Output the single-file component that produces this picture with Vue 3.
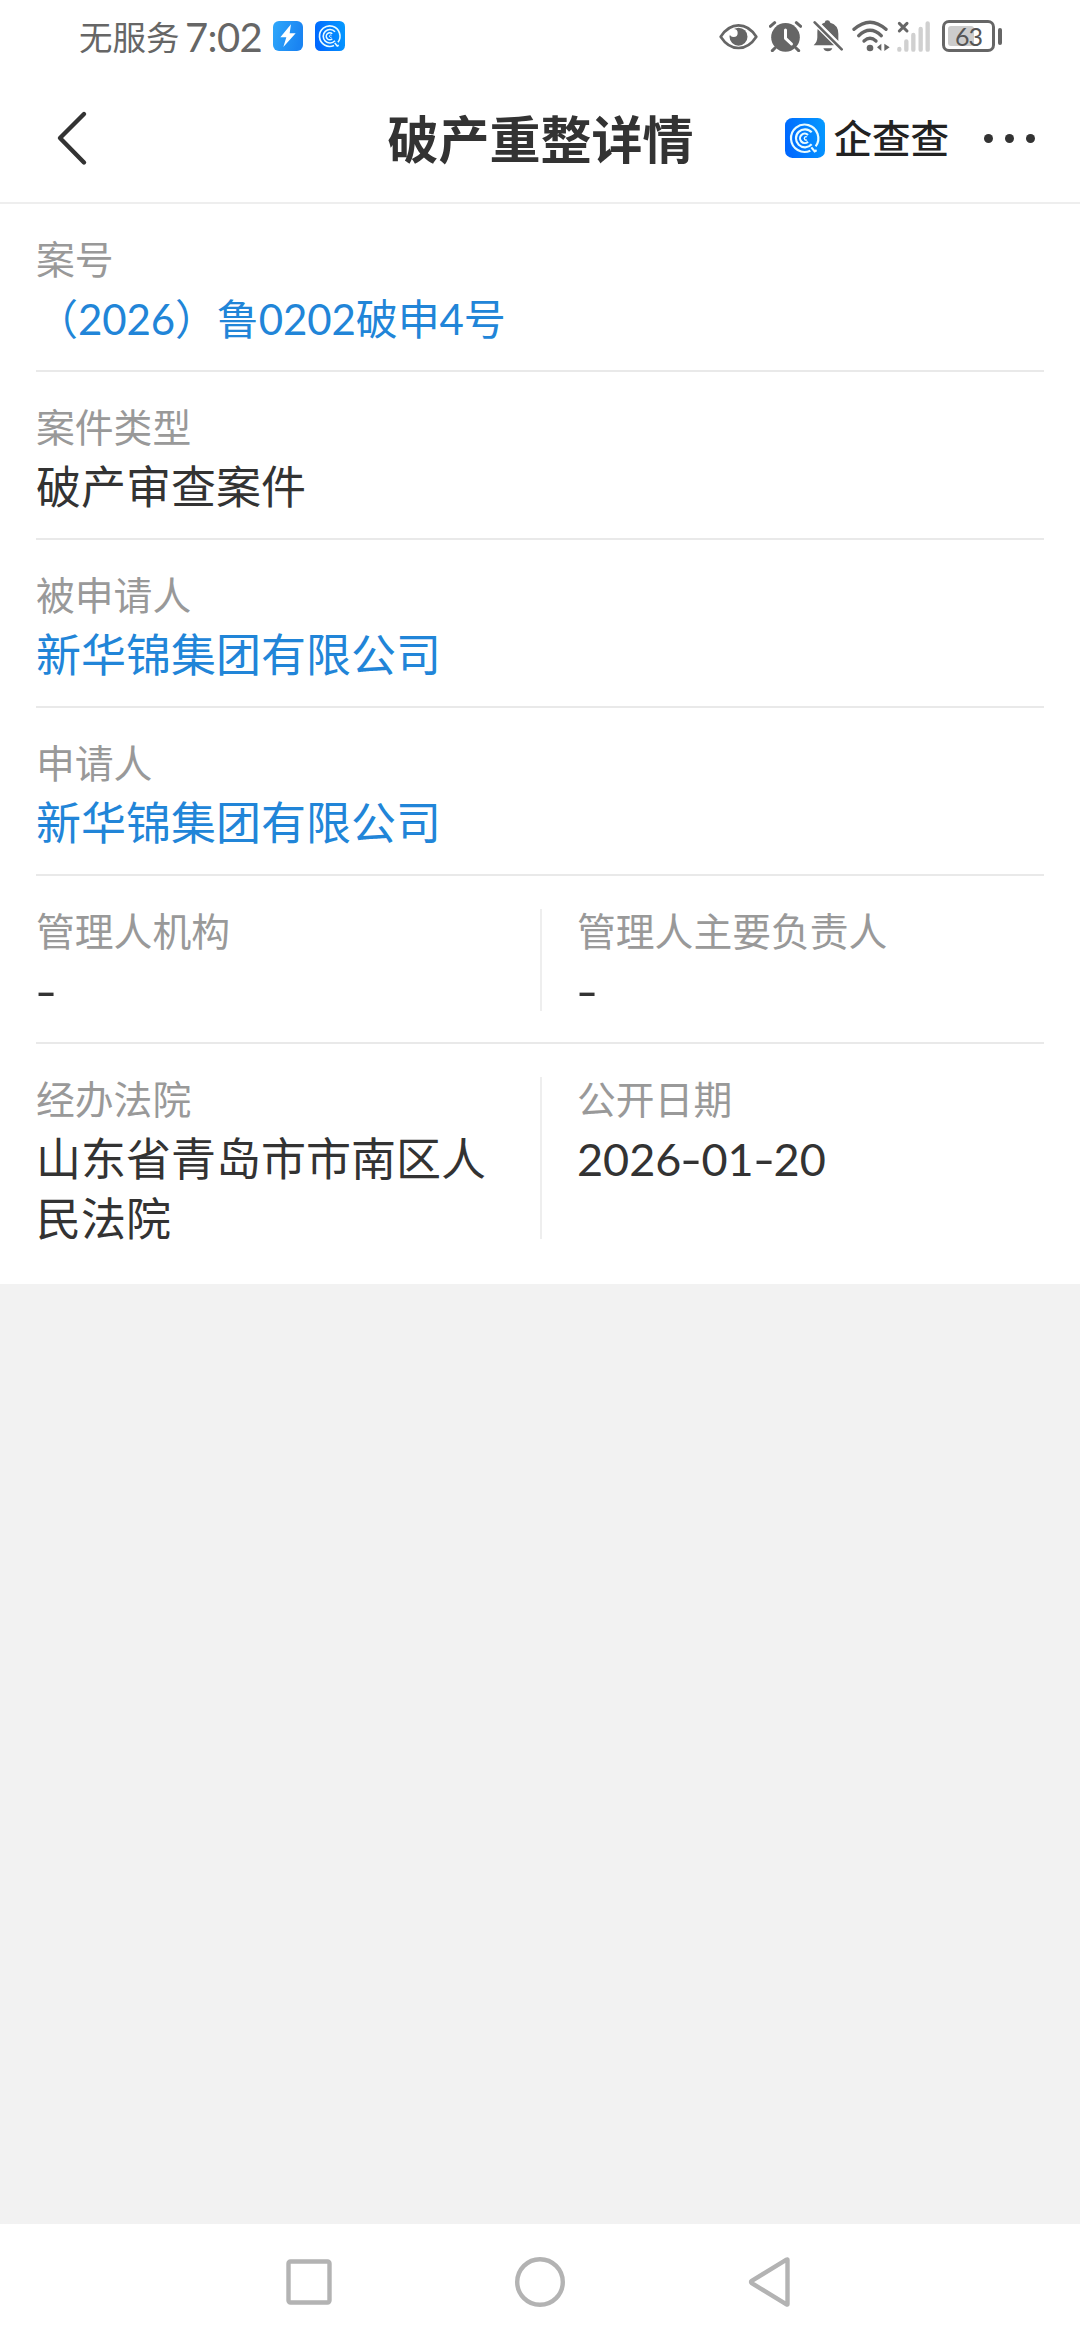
<template>
  <div class="page">
    <div class="status-bar">
      <div class="status-left">
        <span class="carrier">无服务</span>
        <span class="time">7:02</span>
        <svg class="app-icon" viewBox="0 0 90 90">
          <defs>
            <linearGradient id="flash" x1="0" y1="0" x2="1" y2="0.3">
              <stop offset="0" stop-color="#2fa8fb" />
              <stop offset="1" stop-color="#1a84f2" />
            </linearGradient>
          </defs>
          <rect width="90" height="90" rx="18" fill="url(#flash)" />
          <path d="M54 10 22 49h18l-9 29 37-41H50z" fill="#fff" />
        </svg>
        <svg class="app-icon" viewBox="0 0 120 120">
          <use href="#qcc-logo" />
        </svg>
      </div>
      <div class="status-right">
        <!-- eye -->
        <svg class="eye" viewBox="0 0 117 93">
          <path d="M5 47C20 24 38 13 58.500 13S97 24 112 47C97 70 79 81 58.500 81S20 70 5 47Z" fill="none" stroke="#666" stroke-width="8" stroke-linejoin="round" />
          <circle cx="58.500" cy="47" r="27" fill="#666" />
          <circle cx="44" cy="36" r="12" fill="#fff" />
        </svg>
        <!-- alarm -->
        <svg class="alarm" viewBox="0 0 99 93">
          <circle cx="49.500" cy="49" r="43" fill="#666" />
          <path d="M4 16 17 5M95 16 82 5M18 81l-8 8M81 81l8 8" fill="none" stroke="#666" stroke-width="9" stroke-linecap="round" />
          <path d="M49.500 27v25l18 17" fill="none" stroke="#fff" stroke-width="9" stroke-linecap="round" stroke-linejoin="round" />
        </svg>
        <!-- muted bell -->
        <svg class="bell" viewBox="0 0 90 96">
          <path d="M14 27 63 76H2C9 69 13 62 13 52V38q0-6 1-11ZM26 13Q30 9 35 8q1-7 8-7t9 7q24 7 24 33v22Z" fill="#666" />
          <path d="M31 85h27q-3 9-13.500 9T31 85Z" fill="#666" />
          <path d="M14 6 90 82" fill="none" stroke="#fff" stroke-width="5" />
          <path d="M5 7 86 88" fill="none" stroke="#666" stroke-width="8" stroke-linecap="round" />
        </svg>
        <!-- wifi -->
        <svg class="wifi" viewBox="0 0 114 96">
          <g fill="none" stroke="#666" stroke-width="10" stroke-linecap="round">
            <path d="M6 28Q54-15 102 28" />
            <path d="M20 47Q54 15 88 47" />
            <path d="M36 63Q54 46 72 63" />
          </g>
          <circle cx="54" cy="84" r="10" fill="#666" />
          <path d="M88 71v22L75 82ZM97 71v22l16-11Z" fill="#666" />
        </svg>
        <!-- no signal -->
        <svg class="signal" viewBox="0 0 102 93">
          <path d="M7 84v2M28 61v25M49 42v44M71 24v62M92 7v79" fill="none" stroke="#d0d0d0" stroke-width="13" stroke-linecap="round" />
          <path d="M7 7 30 30M30 7 7 30" fill="none" stroke="#666" stroke-width="9" stroke-linecap="round" />
        </svg>
        <div class="battery">
          <div class="battery-body">
            <span class="battery-fill" :style="{ width: battery + '%' }"></span>
            <span class="battery-text">{{ battery }}</span>
          </div>
          <span class="battery-tip"></span>
        </div>
      </div>
    </div>

    <header class="nav-bar">
      <svg class="back" viewBox="0 0 32 56">
        <path d="M28 4 4 28l24 24.500" fill="none" stroke="#333" stroke-width="4.400" stroke-linecap="round" stroke-linejoin="round" />
      </svg>
      <h1 class="title">破产重整详情</h1>
      <div class="nav-right">
        <svg class="brand-icon" viewBox="0 0 120 120">
          <defs>
            <linearGradient id="qcc" x1="0" y1="0.500" x2="1" y2="0.300">
              <stop offset="0" stop-color="#0068ff" />
              <stop offset="1" stop-color="#0598ff" />
            </linearGradient>
          </defs>
          <g id="qcc-logo">
            <rect width="120" height="120" rx="22" fill="url(#qcc)" />
            <g fill="none" stroke="#e8fbff" stroke-width="6.500">
              <path d="M92 85A41 41 0 1 0 76 98M79 88l10 12 6-3" />
              <path d="M80 43A27 27 0 1 0 80 79" />
              <path d="M69 51A14 14 0 1 0 69 71" />
              <path d="M66 57a5 5 0 1 0 0 8" stroke-width="4" />
            </g>
          </g>
        </svg>
        <span class="brand">企查查</span>
        <span class="more"><i></i><i></i><i></i></span>
      </div>
    </header>

    <main class="detail">
      <section v-for="(row, i) in rows" :key="i" class="row" :class="{ two: row.length > 1 }">
        <div v-for="cell in row" :key="cell.label" class="cell">
          <div class="label">{{ cell.label }}</div>
          <div class="value" :class="cell.type">
            <template v-for="(part, n) in split(cell.value)" :key="n">
              <span v-if="part === '-'" class="dash">-</span>
              <template v-else>{{ part }}</template>
            </template>
          </div>
        </div>
      </section>
    </main>

    <footer class="system-nav">
      <svg viewBox="0 0 52 52"><rect x="5.500" y="5.500" width="41" height="41" rx="2" /></svg>
      <svg viewBox="0 0 52 52"><circle cx="26" cy="26" r="22.800" /></svg>
      <svg viewBox="0 0 52 52"><path d="M42.500 3.800v44.400q0 .800-1 .200L6.800 27.200q-1.600-1.200 0-2.400L41.500 3.600q1-.600 1 .200Z" /></svg>
    </footer>
  </div>
</template>

<script setup>
import { ref } from 'vue'

const battery = ref(63)

const rows = [
  [{ label: '案号', value: '（2026）鲁0202破申4号', type: 'link case-no' }],
  [{ label: '案件类型', value: '破产审查案件' }],
  [{ label: '被申请人', value: '新华锦集团有限公司', type: 'link' }],
  [{ label: '申请人', value: '新华锦集团有限公司', type: 'link' }],
  [
    { label: '管理人机构', value: '-' },
    { label: '管理人主要负责人', value: '-' }
  ],
  [
    { label: '经办法院', value: '山东省青岛市市南区人民法院' },
    { label: '公开日期', value: '2026-01-20' }
  ]
]

// keep the dashes as separate parts
const split = (text) => text.split(/(-)/).filter(Boolean)
</script>

<style>
body {
  background: #f2f2f2;
}
</style>

<style scoped>
.page {
  display: flex;
  flex-direction: column;
  width: 1080px;
  height: 2340px;
  background: #f2f2f2;
  color: #333;
  font-family: Lato, 'Noto Sans CJK SC', sans-serif;
  overflow: hidden;
}

svg {
  display: block;
  flex: none;
}

.status-bar {
  display: flex;
  justify-content: space-between;
  height: 72px;
  padding: 0 78px 0 79px;
  background: #fff;
  color: #666;
}

.status-left,
.status-right {
  display: flex;
  align-items: center;
  height: 72px;
}

.carrier {
  width: 106px;
  padding-top: 1px;
  font-size: 33.5px;
  line-height: 72px;
}

.time {
  width: 88px;
  padding-top: 2px;
  font-size: 40px;
  line-height: 72px;
  letter-spacing: -0.6px;
  white-space: nowrap;
}

.app-icon {
  width: 30px;
  height: 30px;
  margin-right: 12px;
}

.eye {
  width: 39px;
  height: 31px;
  margin-right: 11px;
}

.alarm {
  width: 33px;
  height: 31px;
  margin-right: 11px;
}

.bell {
  width: 30px;
  height: 32px;
  margin-right: 9px;
}

.wifi {
  width: 38px;
  height: 32px;
  margin-right: 7px;
}

.signal {
  width: 34px;
  height: 31px;
  margin-right: 11px;
}

.battery {
  display: flex;
  align-items: center;
  gap: 3px;
}

.battery-body {
  position: relative;
  box-sizing: border-box;
  width: 53px;
  height: 32px;
  padding: 3px;
  border: 3px solid #666;
  border-radius: 7px;
}

.battery-fill {
  display: block;
  height: 20px;
  border-radius: 3px;
  background: #ccc;
}

.battery-text {
  position: absolute;
  inset: 0;
  color: #555;
  font-size: 25px;
  line-height: 27px;
  text-align: center;
  letter-spacing: -1px;
}

.battery-tip {
  width: 4px;
  height: 17px;
  border-radius: 2px;
  background: #666;
}

.nav-bar {
  display: grid;
  grid-template-columns: 1fr auto 1fr;
  align-items: center;
  box-sizing: border-box;
  height: 132px;
  padding: 2px 45px 0 56px;
  border-bottom: 2px solid #eee;
  background: #fff;
}

.back {
  width: 32px;
  height: 56px;
}

.title {
  margin: 3px 0 0 -10px;
  font-size: 51px;
  font-weight: 700;
  line-height: 72px;
}

.nav-right {
  display: flex;
  align-items: center;
  justify-content: flex-end;
}

.brand-icon {
  width: 40px;
  height: 40px;
}

.brand {
  margin-left: 8px;
  color: #222;
  font-size: 38.5px;
  font-weight: 500;
  line-height: 56px;
}

.more {
  display: flex;
  gap: 12px;
  margin-left: 35px;
}

.more i {
  width: 9px;
  height: 9px;
  border-radius: 50%;
  background: #333;
}

.detail {
  padding: 0 36px;
  background: #fff;
}

.row {
  display: grid;
  padding: 33px 0 22px;
  border-bottom: 2px solid #e9e9e9;
}

.row.two {
  grid-template-columns: 1fr 1fr;
}

.row:last-child {
  padding-bottom: 36px;
  border-bottom: 0;
}

.cell {
  position: relative;
}

.two .cell:first-child {
  padding-right: 36px;
}

.cell + .cell {
  padding-left: 37px;
}

/* divider between the two columns */
.cell + .cell::before {
  content: '';
  position: absolute;
  top: 0;
  bottom: 9px;
  left: 0;
  width: 2px;
  background: #eee;
}

.label {
  margin-bottom: 7px;
  color: #999;
  font-size: 38.8px;
  line-height: 45px;
}

.value {
  margin-bottom: -1px;
  font-size: 45px;
  line-height: 60px;
}

.link {
  color: #2185d8;
}

.case-no {
  font-size: 42px;
  letter-spacing: -0.1px;
}

.dash {
  display: inline-block;
  width: 20px;
  text-align: center;
  transform: scaleX(1.35);
}

.system-nav {
  display: flex;
  align-items: center;
  justify-content: space-between;
  box-sizing: border-box;
  height: 116px;
  margin-top: auto;
  padding: 0 283px;
  background: #fff;
}

.system-nav svg {
  width: 52px;
  height: 52px;
  fill: none;
  stroke: #b3b3b3;
  stroke-width: 4.4;
}
</style>
